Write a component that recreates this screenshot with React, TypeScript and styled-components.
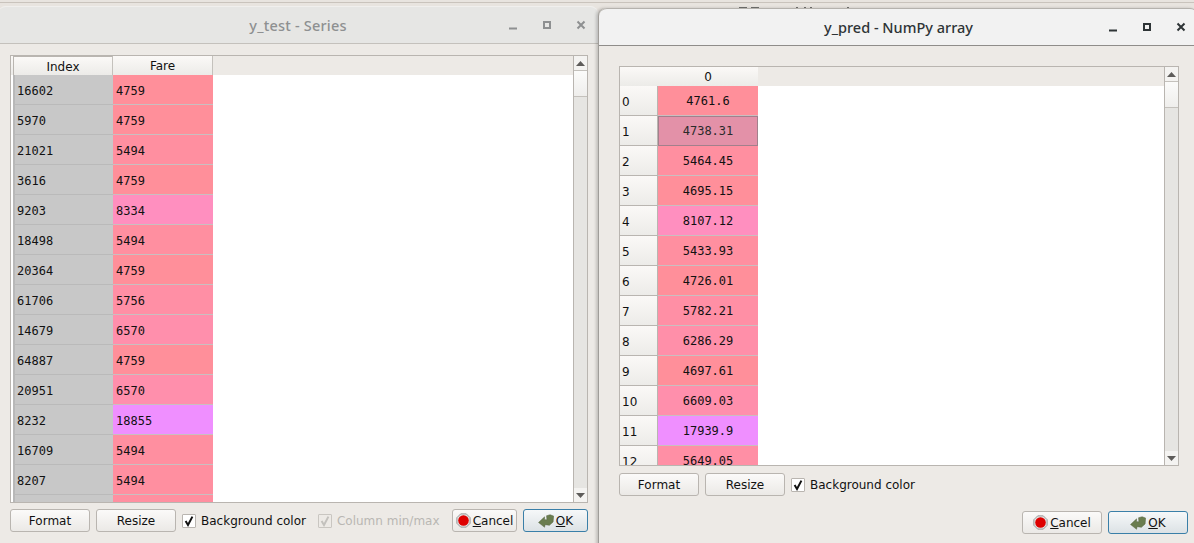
import React from "react";
import styled, { createGlobalStyle } from "styled-components";

const Global = createGlobalStyle`
  html, body { margin: 0; padding: 0; background: #edeae6; overflow: hidden; }
  #root { width: 1194px; height: 543px; }
  * { box-sizing: border-box; }
`;

const Desktop = styled.div`
  position: relative;
  width: 1194px;
  height: 543px;
  overflow: hidden;
  background: linear-gradient(#e8e4df 2px, #c9c3bc 2px, #c9c3bc 3px, #e8e4df 3px);
  font-family: "DejaVu Sans", sans-serif;
  font-size: 12px;
  color: #111;
`;

const BehindMarks = styled.svg`
  position: absolute;
  left: 738px;
  top: 7px;
  width: 120px;
  height: 2px;
`;

const Win = styled.div<{ $front?: boolean }>`
  position: absolute;
  top: ${(p) => (p.$front ? 8 : 6)}px;
  left: ${(p) => (p.$front ? 598 : -2)}px;
  width: 600px;
  height: 540px;
  display: flex;
  flex-direction: column;
  background: #edeae6;
  border-radius: 8px 8px 0 0;
  z-index: ${(p) => (p.$front ? 2 : 1)};
  ${(p) => (p.$front ? "border-left: 1px solid #a09d99; box-shadow: -2px 0 3px rgba(0,0,0,.18);" : "")}
`;

const TitleBar = styled.div<{ $front?: boolean }>`
  position: relative;
  flex: none;
  height: 38px;
  display: flex;
  align-items: center;
  justify-content: center;
  background: ${(p) => (p.$front ? "#f2f2f2" : "#e6e6e4")};
  border-bottom: 1px solid ${(p) => (p.$front ? "#8f8d8a" : "#c4c1bc")};
  border-top: 1px solid ${(p) => (p.$front ? "#b5b2ad" : "#f0efed")};
  border-radius: 8px 8px 0 0;
  color: ${(p) => (p.$front ? "#2e3436" : "#8e9091")};
`;

const Title = styled.span<{ $spread?: number }>`
  font-family: "Noto Sans", sans-serif;
  font-weight: 500;
  font-size: 14.5px;
  letter-spacing: ${(p) => p.$spread ?? 0}px;
`;

const WinButtons = styled.div`
  position: absolute;
  right: 9px;
  top: 12px;
  display: flex;
  gap: 18px;
  align-items: center;
`;

const WinIcon = styled.svg`
  width: 16px;
  height: 12px;
  display: block;
`;

const Body = styled.div<{ $front?: boolean }>`
  flex: 1;
  display: flex;
  flex-direction: column;
  padding: ${(p) => (p.$front ? "20px 19px 0 20px" : "11px 10px 0 12px")};
`;

const Frame = styled.div<{ $h: number }>`
  position: relative;
  flex: none;
  height: ${(p) => p.$h}px;
  display: flex;
  border: 1px solid #b9b5b0;
  background: #fff;
  overflow: hidden;
`;

const Table = styled.div`
  flex: 1;
  min-width: 0;
  overflow: hidden;
  display: flex;
  flex-direction: column;
`;

const HeaderRow = styled.div`
  flex: none;
  height: 19px;
  display: flex;
  background: #edeae6;
`;

const HeadCell = styled.div<{ $w: number; $boxed?: boolean; $plain?: boolean }>`
  width: ${(p) => p.$w}px;
  height: 19px;
  padding-top: 1px;
  display: flex;
  align-items: center;
  justify-content: center;
  background: linear-gradient(#fbf9f7, #ecebe8);
  border-right: ${(p) => (p.$plain ? "none" : "1px solid #c4c1bc")};
  font-size: 12px;
  ${(p) => (p.$boxed ? "border-left: 1px solid #b9b5b0; border-top: 1px solid #b9b5b0;" : "")}
`;

const Row = styled.div<{ $lead: number }>`
  flex: none;
  height: 30px;
  display: flex;
  padding-left: ${(p) => p.$lead}px;
`;

const IndexCell = styled.div`
  width: 100px;
  height: 30px;
  padding: 2px 0 0 2px;
  display: flex;
  align-items: center;
  background: #c8c8c8;
  border-left: 2px solid #b8b8b8;
  border-bottom: 1px solid #bababa;
  font-family: "DejaVu Sans Mono", monospace;
  font-size: 12px;
`;

const RowHead = styled.div`
  width: 38px;
  height: 30px;
  padding: 2px 0 0 2px;
  display: flex;
  align-items: center;
  background: linear-gradient(#fbf9f7, #ecebe8);
  border-bottom: 1px solid #b9b5b0;
  border-right: 1px solid #b9b5b0;
  font-size: 12px;
`;

const DataCell = styled.div<{ $bg: string; $center?: boolean; $sel?: boolean }>`
  width: 100px;
  height: 30px;
  padding: ${(p) => (p.$center ? "1px 0 0" : "2px 0 0 3px")};
  display: flex;
  align-items: center;
  justify-content: ${(p) => (p.$center ? "center" : "flex-start")};
  background: ${(p) => p.$bg};
  border-bottom: 1px solid #c9bfc0;
  font-family: "DejaVu Sans Mono", monospace;
  font-size: 12px;
  ${(p) => (p.$sel ? "background: #e391a8; outline: 1px solid #a2808c; outline-offset: -1px; color: #2b2b2b;" : "")}
`;

const Scroll = styled.div`
  flex: none;
  width: 14px;
  display: flex;
  flex-direction: column;
  background: #e6e5e2;
  border-left: 1px solid #b9b5b0;
`;

const Arrow = styled.div`
  flex: none;
  height: 14px;
  display: flex;
  align-items: center;
  justify-content: center;
  background: #f4f3f1;
`;

const Thumb = styled.div`
  flex: none;
  height: 27px;
  background: linear-gradient(#fbfbfa, #efeeec);
  border-top: 1px solid #c4c1bc;
  border-bottom: 1px solid #c4c1bc;
`;

const Track = styled.div`
  flex: 1;
`;

const Toolbar = styled.div<{ $front?: boolean }>`
  flex: none;
  display: flex;
  align-items: center;
  gap: 6px;
  height: 23px;
  margin-top: ${(p) => (p.$front ? 7 : 6)}px;
`;

const Btn = styled.button<{ $w?: number; $primary?: boolean }>`
  width: ${(p) => p.$w ?? 80}px;
  height: 23px;
  margin: 0;
  padding: 0;
  display: flex;
  align-items: center;
  justify-content: center;
  gap: 2px;
  font: 12px "DejaVu Sans", sans-serif;
  color: #111;
  border: 1px solid ${(p) => (p.$primary ? "#3a7fa8" : "#b9b5b0")};
  border-radius: 3px;
  background: ${(p) =>
    p.$primary ? "linear-gradient(#f6f8f9, #dce2e5)" : "linear-gradient(#fbfaf9, #ebe9e6)"};
`;

const Check = styled.label<{ $off?: boolean }>`
  display: inline-flex;
  align-items: center;
  gap: 5px;
  margin-left: ${(p) => (p.$off ? 6 : 0)}px;
  color: ${(p) => (p.$off ? "#b9b7b3" : "#111")};
`;

const Box = styled.span<{ $off?: boolean }>`
  width: 14px;
  height: 14px;
  display: flex;
  align-items: center;
  justify-content: center;
  background: ${(p) => (p.$off ? "#edeae6" : "#fff")};
  border: 1px solid ${(p) => (p.$off ? "#c9c6c1" : "#b9b5b0")};
  border-radius: 1px;
`;

const Spacer = styled.div`
  flex: 1;
`;

const Footer = styled.div`
  flex: none;
  display: flex;
  gap: 6px;
  justify-content: flex-end;
  margin-top: 15px;
  margin-right: -9px;
`;

const U = styled.span`
  text-decoration: underline;
`;

const CheckMark = ({ off }: { off?: boolean }) => (
  <svg width="12" height="12" viewBox="0 0 12 12">
    <path d="M2.6 6 L5 10 L9.4 1.6" fill="none" stroke={off ? "#c3c1bd" : "#111"} strokeWidth="2" />
  </svg>
);

const Stop = () => (
  <svg width="15" height="15" viewBox="0 0 17 17">
    <path d="M5.3 1h6.4L16 5.3v6.4L11.7 16H5.3L1 11.7V5.3z" fill="#e4e4e4" stroke="#8c8c8c" />
    <circle cx="8.5" cy="8.5" r="6" fill="#de0000" />
  </svg>
);

const OkIcon = () => (
  <svg width="16" height="14" viewBox="0 0 18 15">
    <path d="M0.6 9.2 L7.4 2.8 V6 H10 L9.6 1.6 L13.6 0.4 L17.6 2 L17 8.6 L12.8 12.4 L8 11.6 L7.4 14.6 Z" fill="#6a7d4f" stroke="#4d5c38" strokeWidth=".5" />
  </svg>
);

const UpArrow = () => (
  <svg width="9" height="5" viewBox="0 0 9 5"><path d="M4.5 0 9 5H0z" fill="#5e5c5a" /></svg>
);
const DownArrow = () => (
  <svg width="9" height="5" viewBox="0 0 9 5"><path d="M0 0h9L4.5 5z" fill="#5e5c5a" /></svg>
);

const Controls = ({ color }: { color: string }) => (
  <WinButtons>
    <WinIcon viewBox="0 0 16 12">
      <path d="M4 9.5h8" stroke={color} strokeWidth="2" />
    </WinIcon>
    <WinIcon viewBox="0 0 16 12">
      <path d="M5 3h6v6h-6z" fill="none" stroke={color} strokeWidth="2" />
    </WinIcon>
    <WinIcon viewBox="0 0 16 12">
      <path d="M4.5 2.5l7 7M11.5 2.5l-7 7" stroke={color} strokeWidth="2" />
    </WinIcon>
  </WinButtons>
);

const shade = (v: number) => {
  if (v > 15000) return "#ef8fff";
  if (v > 8000) return "#ff8fbf";
  if (v > 6500) return "#ff8fac";
  if (v > 6000) return "#ff8fa9";
  if (v > 5600) return "#ff8fa5";
  if (v > 5300) return "#ff8fa0";
  return "#ff8f9a";
};

const leftRows: [string, number][] = [
  ["16602", 4759], ["5970", 4759], ["21021", 5494], ["3616", 4759], ["9203", 8334],
  ["18498", 5494], ["20364", 4759], ["61706", 5756], ["14679", 6570], ["64887", 4759],
  ["20951", 6570], ["8232", 18855], ["16709", 5494], ["8207", 5494], ["", 5494],
];

const rightRows = [
  "4761.6", "4738.31", "5464.45", "4695.15", "8107.12", "5433.93", "4726.01",
  "5782.21", "6286.29", "4697.61", "6609.03", "17939.9", "5649.05",
];

const Scrollbar = () => (
  <Scroll>
    <Arrow><UpArrow /></Arrow>
    <Thumb />
    <Track />
    <Arrow><DownArrow /></Arrow>
  </Scroll>
);

export default function App() {
  return (
    <Desktop>
      <Global />
      <BehindMarks viewBox="0 0 120 2">
        <path d="M1 1h8M13 1h8M58 1h2M66 1h2M72 1h2M109 1h2" stroke="#4a4a4a" strokeWidth="1.4" />
      </BehindMarks>
      <Win>
        <TitleBar>
          <Title $spread={0.2}>y_test - Series</Title>
          <Controls color="#8e9091" />
        </TitleBar>
        <Body>
          <Frame $h={448}>
            <Table>
              <HeaderRow>
                <HeadCell $w={2} $plain />
                <HeadCell $w={100} $boxed>Index</HeadCell>
                <HeadCell $w={100}>Fare</HeadCell>
              </HeaderRow>
              {leftRows.map(([idx, v], i) => (
                <Row key={i} $lead={2}>
                  <IndexCell>{idx}</IndexCell>
                  <DataCell $bg={shade(v)}>{idx ? v : ""}</DataCell>
                </Row>
              ))}
            </Table>
            <Scrollbar />
          </Frame>
          <Toolbar>
            <Btn>Format</Btn>
            <Btn>Resize</Btn>
            <Check>
              <Box><CheckMark /></Box>
              Background color
            </Check>
            <Check $off>
              <Box $off><CheckMark off /></Box>
              Column min/max
            </Check>
            <Spacer />
            <Btn $w={65}><Stop /><span><U>C</U>ancel</span></Btn>
            <Btn $w={65} $primary><OkIcon /><span><U>O</U>K</span></Btn>
          </Toolbar>
        </Body>
      </Win>
      <Win $front>
        <TitleBar $front>
          <Title>y_pred - NumPy array</Title>
          <Controls color="#2e3436" />
        </TitleBar>
        <Body $front>
          <Frame $h={400}>
            <Table>
              <HeaderRow>
                <HeadCell $w={38} $plain />
                <HeadCell $w={100} $plain>0</HeadCell>
              </HeaderRow>
              {rightRows.map((v, i) => (
                <Row key={v} $lead={0}>
                  <RowHead>{i}</RowHead>
                  <DataCell $center $sel={i === 1} $bg={shade(parseFloat(v))}>{v}</DataCell>
                </Row>
              ))}
            </Table>
            <Scrollbar />
          </Frame>
          <Toolbar $front>
            <Btn>Format</Btn>
            <Btn>Resize</Btn>
            <Check>
              <Box><CheckMark /></Box>
              Background color
            </Check>
          </Toolbar>
          <Footer>
            <Btn $w={80}><Stop /><span><U>C</U>ancel</span></Btn>
            <Btn $w={80} $primary><OkIcon /><span><U>O</U>K</span></Btn>
          </Footer>
        </Body>
      </Win>
    </Desktop>
  );
}
